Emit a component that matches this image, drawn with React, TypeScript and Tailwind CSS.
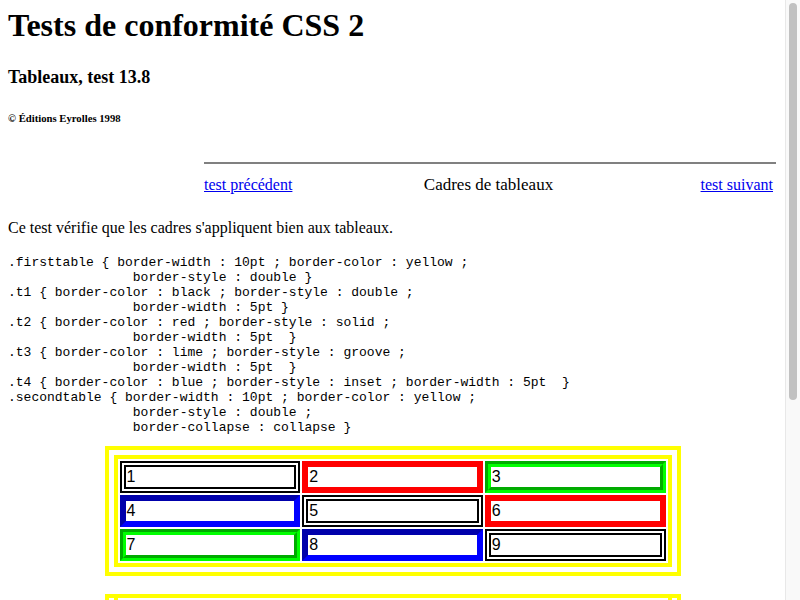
import React from 'react';

type Kind = 't1' | 't2' | 't3' | 't4';

const borderOf: Record<Kind, string> = {
  t1: 'border-[6px] border-double border-black',
  t2: 'border-[6px] border-solid border-[#ff0000]',
  t3: 'border-[6px] [--tw-border-style:groove] [border-style:groove] border-[#00ff00]',
  t4: 'border-[6px] [--tw-border-style:inset] [border-style:inset] border-[#0000ff]',
};

const grid: [string, Kind][][] = [
  [['1', 't1'], ['2', 't2'], ['3', 't3']],
  [['4', 't4'], ['5', 't1'], ['6', 't2']],
  [['7', 't3'], ['8', 't4'], ['9', 't1']],
];

const css = `.firsttable { border-width : 10pt ; border-color : yellow ;
                border-style : double }
.t1 { border-color : black ; border-style : double ;
                border-width : 5pt }
.t2 { border-color : red ; border-style : solid ;
                border-width : 5pt  }
.t3 { border-color : lime ; border-style : groove ;
                border-width : 5pt  }
.t4 { border-color : blue ; border-style : inset ; border-width : 5pt  }
.secondtable { border-width : 10pt ; border-color : yellow ;
                border-style : double ;
                border-collapse : collapse }`;

const cellText = "p-[1px] text-left align-middle font-['Liberation_Sans',Arial,sans-serif] text-[16px] leading-[18px]";

const Nav: React.FC = () => (
  <div className="ml-[196px] w-[572px]">
    <div className="h-[2px] bg-[#808080]" />
    <div className="mt-[12px] grid grid-cols-3 items-baseline pr-[3px] text-[16px] leading-[18px]">
      <a href="#" className="justify-self-start text-[#0000ee] underline">test précédent</a>
      <span className="justify-self-center text-[17px]">Cadres de tableaux</span>
      <a href="#" className="justify-self-end text-[#0000ee] underline">test suivant</a>
    </div>
  </div>
);

const CellTable: React.FC<{ collapse?: boolean }> = ({ collapse }) => (
  <table
    className={
      collapse
        ? 'mx-auto mt-[18px] w-[576px] border-collapse border-[13px] border-double border-[#ffff00]'
        : 'mx-auto mt-[11px] w-[576px] border-separate border-spacing-[2px] border-[13px] border-double border-[#ffff00]'
    }
  >
    {collapse && (
      <colgroup>
        <col className="w-[210px]" />
        <col className="w-[164px]" />
        <col className="w-[202px]" />
      </colgroup>
    )}
    <tbody>
      {grid.map((row, i) => (
        <tr key={i}>
          {row.map(([n, kind]) => (
            <td key={n} className={`${borderOf[kind]} ${cellText}`}>
              {n}
            </td>
          ))}
        </tr>
      ))}
    </tbody>
  </table>
);

// stand-in for the browser's vertical scrollbar seen in the capture
const Scrollbar: React.FC = () => (
  <div className="fixed top-0 right-0 h-screen w-[15px] border-l border-[#e8e8e8] bg-[#f9f9f9]">
    <div className="mx-auto mt-[3px] h-[397px] w-[8px] rounded-full bg-[#c1c1c1]" />
  </div>
);

export default function App() {
  return (
    <div className="bg-white">
      <div className="w-[785px] px-[8px] pt-[7px] pb-[40px] font-['Liberation_Serif','Times_New_Roman',serif] text-black">
        <h1 className="text-[32px] font-bold leading-[36px]">Tests de conformité CSS 2</h1>
        <h2 className="mt-[24px] text-[18px] font-bold leading-[21px]">Tableaux, test 13.8</h2>
        <p className="mt-[24px] text-[10.7px] font-bold leading-[12px]">© Éditions Eyrolles 1998</p>

        <div className="mt-[38px]">
          <Nav />
        </div>

        <p className="mt-[25px] text-[16px] leading-[18px]">
          Ce test vérifie que les cadres s'appliquent bien aux tableaux.
        </p>

        <pre className="mt-[18px] font-['Liberation_Mono','Courier_New',monospace] text-[13px] leading-[15px]">{css}</pre>

        <CellTable />
        <CellTable collapse />

        <div className="mt-[110px]">
          <Nav />
        </div>
      </div>
      <Scrollbar />
    </div>
  );
}
